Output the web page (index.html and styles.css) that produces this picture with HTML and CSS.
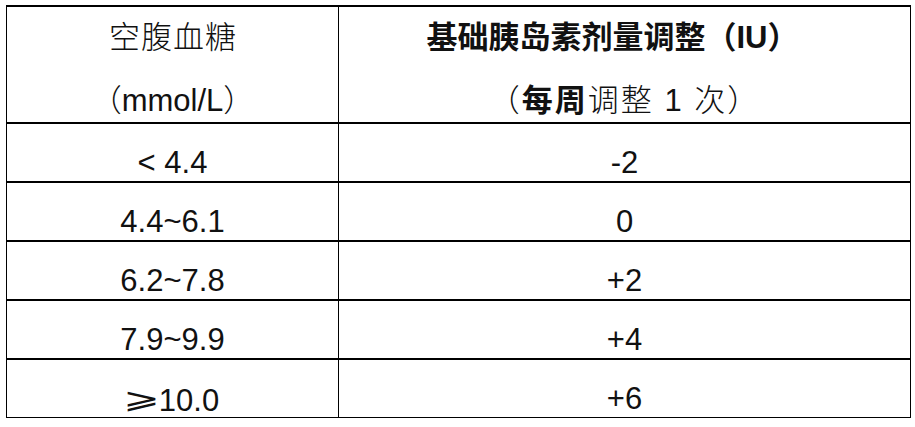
FILE: index.html
```html
<!DOCTYPE html>
<html lang="zh-CN">
<head>
<meta charset="utf-8">
<title>基础胰岛素剂量调整</title>
<link rel="stylesheet" href="styles.css">
</head>
<body>
<table class="dose-table">
  <thead>
    <tr class="head-row">
      <th class="col-glucose">
        <div class="line line-first cjk-light wide">空腹血糖</div>
        <div class="line line-second cjk-light">（mmol/L）</div>
      </th>
      <th class="col-dose">
        <div class="line line-first cjk-bold shift-left">基础胰岛素剂量调整（IU）</div>
        <div class="line line-second cjk-light spaced">（<b class="strong">每周</b>调整 1 次）</div>
      </th>
    </tr>
  </thead>
  <tbody>
    <tr class="data-row"><td class="col-glucose">&lt; 4.4</td><td class="col-dose">-2</td></tr>
    <tr class="data-row"><td class="col-glucose">4.4~6.1</td><td class="col-dose">0</td></tr>
    <tr class="data-row"><td class="col-glucose">6.2~7.8</td><td class="col-dose">+2</td></tr>
    <tr class="data-row"><td class="col-glucose">7.9~9.9</td><td class="col-dose">+4</td></tr>
    <tr class="data-row last"><td class="col-glucose"><span class="geq">⩾</span>10.0</td><td class="col-dose">+6</td></tr>
  </tbody>
</table>
</body>
</html>
```
FILE: styles.css
```css
html, body {
  margin: 0;
  padding: 0;
  background: #ffffff;
}

body {
  padding: 5px 0 0 6px;
  color: #111111;
  font-family: "Liberation Sans", "DejaVu Sans", "Noto Sans CJK SC", sans-serif;
}

.dose-table {
  border-collapse: separate;
  border-spacing: 0;
  table-layout: fixed;
  width: 905px;
  border-top: 2px solid #000;
  border-left: 1px solid #000;
  border-right: 1px solid #000;
}

.dose-table th,
.dose-table td {
  padding: 0;
  text-align: center;
  vertical-align: top;
  border-bottom: 2px solid #000;
}

.col-glucose {
  width: 332px;
  border-right: 1px solid #000;
}

.head-row th {
  height: 117px;
  box-sizing: border-box;
  font-weight: normal;
}

.line {
  font-size: 31px;
  white-space: nowrap;
}

.line-first {
  height: 62px;
  line-height: 62px;
}

.line-second {
  height: 53px;
  line-height: 64px;
}

.wide {
  letter-spacing: 1px;
  padding-left: 1px;
}

.shift-left {
  padding-right: 24px;
}

.spaced {
  letter-spacing: 2px;
}

.cjk-light {
  font-family: "Liberation Sans", "Noto Sans CJK SC", sans-serif;
  font-weight: 300;
}

.cjk-bold {
  font-family: "Liberation Sans", "Noto Sans CJK SC", sans-serif;
  font-weight: 700;
}

.strong {
  font-weight: 700;
}

.data-row td {
  height: 59px;
  box-sizing: border-box;
  padding-top: 22px;
  font-size: 31px;
  line-height: 33px;
  white-space: nowrap;
}

.data-row.last td {
  height: 57px;
  border-bottom-width: 1px;
}

.geq {
  display: inline-block;
  font-family: "DejaVu Sans", "Noto Sans CJK SC", sans-serif;
  font-size: 30px;
  font-weight: 300;
  margin: 0 5px 0 3px;
  vertical-align: 2px;
  transform: scale(1.45, 0.92);
}
```
